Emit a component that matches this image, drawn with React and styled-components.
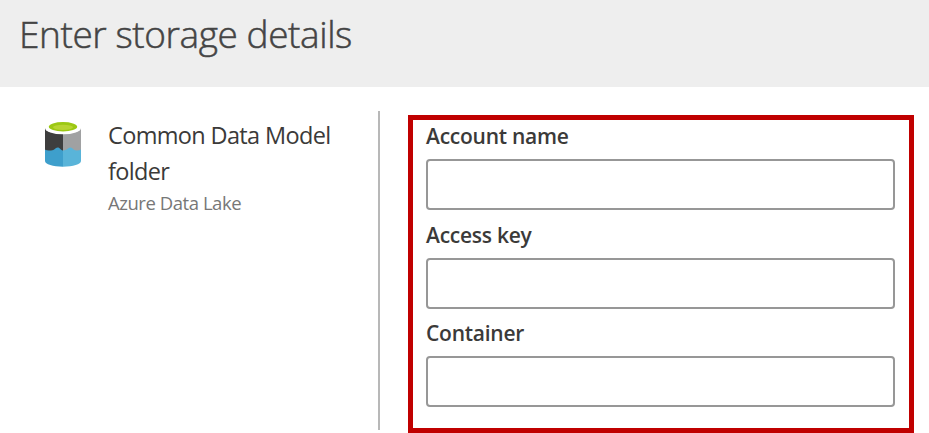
import React from "react";
import styled, { createGlobalStyle } from "styled-components";

const GlobalStyle = createGlobalStyle`
  *, *::before, *::after { box-sizing: border-box; }
  html, body { margin: 0; background: #fff; }
  body { font-family: "Open Sans", "Noto Sans", sans-serif; color: #3b3a39; overflow: hidden; }
`;

const Page = styled.div`
  width: 929px;
  height: 433px;
  display: flex;
  flex-direction: column;
`;

const Header = styled.header`
  flex: none;
  height: 87px;
  padding: 8px 19px 0;
  background: #eeeeee;
`;

const Title = styled.h1`
  margin: 0;
  font-size: 37px;
  font-weight: 300;
  line-height: 51px;
  letter-spacing: -0.42px;
  color: #444;
  -webkit-text-stroke: 0.5px #444;
  white-space: nowrap;
`;

const Body = styled.main`
  flex: 1;
  display: flex;
  align-items: flex-start;
`;

const Source = styled.section`
  display: flex;
  width: 380px;
  height: 319px;
  margin-top: 24px;
  padding: 7px 0 0 43px;
  border-right: 2px solid #b8b8b8;
`;

const SourceIcon = styled.svg`
  flex: none;
  width: 40px;
  height: 52px;
  margin-right: 25px;
`;

const SourceName = styled.div`
  width: 240px;
  margin-top: -1px;
  font-size: 23.5px;
  line-height: 36px;
  letter-spacing: -0.65px;
`;

const SourceKind = styled.div`
  margin-top: 1px;
  font-size: 18.5px;
  line-height: 26px;
  letter-spacing: -0.45px;
  color: #777;
`;

const Form = styled.form`
  width: 506px;
  height: 318px;
  margin: 28px 0 0 28px;
  padding: 0 14px 0 13px;
  border: 5px solid #c00000;
`;

const Field = styled.label`
  display: block;
  height: 98.5px;
`;

const FieldLabel = styled.span`
  display: block;
  height: 39px;
  font-size: 21px;
  font-weight: 600;
  line-height: 33px;
  letter-spacing: -0.25px;
`;

const Input = styled.input`
  display: block;
  width: 469px;
  height: 51px;
  padding: 0 10px;
  border: 2px solid #979797;
  border-radius: 4px;
  background: #fff;
  font: inherit;
  outline: none;
`;

const fields = ["Account name", "Access key", "Container"];

function DataLakeIcon() {
  return (
    <SourceIcon viewBox="0 0 40 52" aria-hidden="true">
      <path d="M2 10v33c0 3.300 8 5.700 18 5.700V10z" fill="#3e9fcc" />
      <path d="M20 10v38.700c10 0 18-2.400 18-5.700V10z" fill="#59b4d9" />
      <path d="M2 10v21.500q1 1 6 1c4 0 4-3 6.700-3 2.300 0 2.300 2.500 5.300 3V10z" fill="#3e3e3e" />
      <path d="M20 10v22.500c4.500 0 4.500-3 7.500-3 2.500 0 2.500 3 6 3q3.500 0 4.500-1V10z" fill="#a0a1a2" />
      <ellipse cx="20" cy="10" rx="18" ry="6.300" fill="#fff" />
      <ellipse cx="20" cy="8.800" rx="14.200" ry="4.700" fill="#9cc813" />
      <ellipse cx="20" cy="9.300" rx="10" ry="2.600" fill="#b8d432" />
    </SourceIcon>
  );
}

export default function App() {
  return (
    <Page>
      <GlobalStyle />
      <Header>
        <Title>Enter storage details</Title>
      </Header>
      <Body>
        <Source>
          <DataLakeIcon />
          <div>
            <SourceName>Common Data Model folder</SourceName>
            <SourceKind>Azure Data Lake</SourceKind>
          </div>
        </Source>
        <Form>
          {fields.map((name) => (
            <Field key={name}>
              <FieldLabel>{name}</FieldLabel>
              <Input type="text" />
            </Field>
          ))}
        </Form>
      </Body>
    </Page>
  );
}
